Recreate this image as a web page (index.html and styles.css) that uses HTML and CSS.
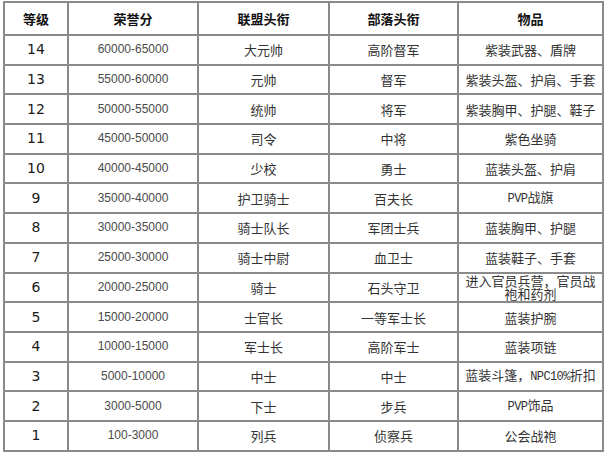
FILE: index.html
```html
<!DOCTYPE html>
<html lang="zh">
<head>
<meta charset="utf-8">
<title>荣誉等级</title>
<link rel="stylesheet" href="styles.css">
</head>
<body>
<table class="rank">
  <colgroup>
    <col class="c1"><col class="c2"><col class="c3"><col class="c4"><col class="c5">
  </colgroup>
  <thead>
    <tr><th>等级</th><th>荣誉分</th><th>联盟头衔</th><th>部落头衔</th><th>物品</th></tr>
  </thead>
  <tbody>
    <tr><td class="lv">14</td><td class="pt">60000-65000</td><td>大元帅</td><td>高阶督军</td><td>紫装武器、盾牌</td></tr>
    <tr><td class="lv">13</td><td class="pt">55000-60000</td><td>元帅</td><td>督军</td><td>紫装头盔、护肩、手套</td></tr>
    <tr><td class="lv">12</td><td class="pt">50000-55000</td><td>统帅</td><td>将军</td><td>紫装胸甲、护腿、鞋子</td></tr>
    <tr><td class="lv">11</td><td class="pt">45000-50000</td><td>司令</td><td>中将</td><td>紫色坐骑</td></tr>
    <tr><td class="lv">10</td><td class="pt">40000-45000</td><td>少校</td><td>勇士</td><td>蓝装头盔、护肩</td></tr>
    <tr><td class="lv">9</td><td class="pt">35000-40000</td><td>护卫骑士</td><td>百夫长</td><td><span class="lat">PVP</span>战旗</td></tr>
    <tr><td class="lv">8</td><td class="pt">30000-35000</td><td>骑士队长</td><td>军团士兵</td><td>蓝装胸甲、护腿</td></tr>
    <tr><td class="lv">7</td><td class="pt">25000-30000</td><td>骑士中尉</td><td>血卫士</td><td>蓝装鞋子、手套</td></tr>
    <tr><td class="lv">6</td><td class="pt">20000-25000</td><td>骑士</td><td>石头守卫</td><td class="wrap"><div class="clip">进入官员兵营，官员战袍和药剂</div></td></tr>
    <tr><td class="lv">5</td><td class="pt">15000-20000</td><td>士官长</td><td>一等军士长</td><td>蓝装护腕</td></tr>
    <tr><td class="lv">4</td><td class="pt">10000-15000</td><td>军士长</td><td>高阶军士</td><td>蓝装项链</td></tr>
    <tr><td class="lv">3</td><td class="pt">5000-10000</td><td>中士</td><td>中士</td><td>蓝装斗篷，<span class="lat">NPC10%</span>折扣</td></tr>
    <tr><td class="lv">2</td><td class="pt">3000-5000</td><td>下士</td><td>步兵</td><td><span class="lat">PVP</span>饰品</td></tr>
    <tr><td class="lv">1</td><td class="pt">100-3000</td><td>列兵</td><td>侦察兵</td><td>公会战袍</td></tr>
  </tbody>
</table>
</body>
</html>
```
FILE: styles.css
```css
html, body {
  margin: 0;
  padding: 0;
  background: #ffffff;
}
body {
  padding: 1px 0 0 3px;
  font-family: "Noto Sans CJK SC", "Noto Sans", sans-serif;
  color: #333;
}
.rank {
  border-collapse: collapse;
  table-layout: fixed;
  width: 601px;
}
.rank .c1 { width: 64px; }
.rank .c2 { width: 130px; }
.rank .c3 { width: 131px; }
.rank .c4 { width: 129px; }
.rank .c5 { width: 145px; }
.rank th,
.rank td {
  border: 2px solid #8a8a8a;
  padding: 0;
  text-align: center;
  vertical-align: middle;
  font-size: 13px;
  line-height: 15px;
  white-space: nowrap;
  overflow: hidden;
}
.rank th {
  height: 31px;
  font-weight: bold;
  color: #111;
}
.rank td {
  height: 27.7px;
}
.rank td.lv {
  font-family: "DejaVu Sans", Verdana, sans-serif;
  font-size: 14px;
  color: #1a1a1a;
}
.rank td.pt {
  font-family: "Liberation Sans", Arial, sans-serif;
  font-size: 12px;
  color: #4a4a4a;
}
.lat {
  font-family: "Liberation Mono", "Courier New", monospace;
  font-size: 12px;
  letter-spacing: -0.6px;
}
.rank td.wrap {
  white-space: normal;
  vertical-align: top;
}
.clip {
  height: 27.7px;
  overflow: hidden;
  padding: 0 4px;
  line-height: 13.5px;
}
```
